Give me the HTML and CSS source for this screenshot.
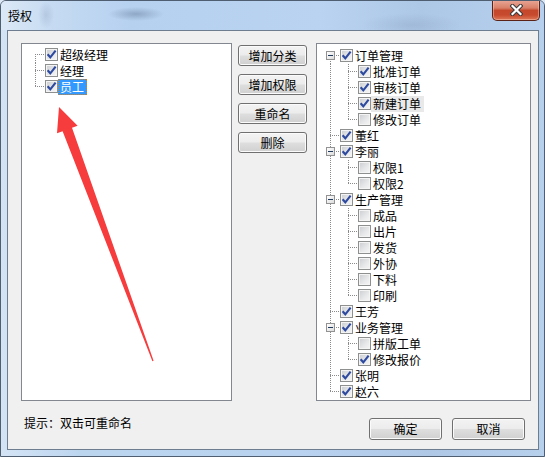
FILE: index.html
```html
<!DOCTYPE html>
<html lang="zh-CN">
<head>
    <meta charset="UTF-8">
    <title>授权</title>
    <link rel="stylesheet" href="styles.css">
</head>
<body>
    <div class="window">
        <div class="titlebar">
            <span class="title">授权</span>
            <button class="close">
                <svg width="13" height="12" viewBox="0 0 13 12">
                    <path d="M2.5 2 L10.5 10 M10.5 2 L2.5 10" stroke="#3a3a3a" stroke-width="4.2" stroke-linecap="square"/>
                    <path d="M2.5 2 L10.5 10 M10.5 2 L2.5 10" stroke="#fff" stroke-width="2.2" stroke-linecap="square"/>
                </svg>
            </button>
        </div>
        <div class="client">
            <div class="main">
                <div class="panel left-panel">
                    <div class="tree left-tree" id="leftTree"></div>
                    <svg class="arrow" width="102" height="260" viewBox="0 0 102 260">
                        <polygon points="5,3 23.6,21.7 18,23.8 99.6,256.8 98.4,257.2 8.6,27.2 3,29.3" fill="#f63c3c"/>
                    </svg>
                </div>
                <div class="side-buttons">
                    <button class="btn">增加分类</button>
                    <button class="btn">增加权限</button>
                    <button class="btn">重命名</button>
                    <button class="btn">删除</button>
                </div>
                <div class="panel right-panel">
                    <div class="tree right-tree" id="rightTree"></div>
                </div>
            </div>
            <div class="footer">
                <span class="hint">提示：双击可重命名</span>
                <div class="footer-buttons">
                    <button class="btn wide">确定</button>
                    <button class="btn wide">取消</button>
                </div>
            </div>
        </div>
    </div>

<script>
//チェックマーク
const check = '<svg width="11" height="11" viewBox="0 0 11 11"><path d="M1.6 5.2 L4.3 8.3 L9.6 1.6" fill="none" stroke="#2e4aa0" stroke-width="2.1"/></svg>';

const leftItems = [
    {text: '超级经理', checked: true},
    {text: '经理', checked: true},
    {text: '员工', checked: true, sel: true}
];

const rightItems = [
    {text: '订单管理', checked: true, children: [
        {text: '批准订单', checked: true},
        {text: '审核订单', checked: true},
        {text: '新建订单', checked: true, hot: true},
        {text: '修改订单'}
    ]},
    {text: '董红', checked: true},
    {text: '李丽', checked: true, children: [
        {text: '权限1'},
        {text: '权限2'}
    ]},
    {text: '生产管理', checked: true, children: [
        {text: '成品'},
        {text: '出片'},
        {text: '发货'},
        {text: '外协'},
        {text: '下料'},
        {text: '印刷'}
    ]},
    {text: '王芳', checked: true},
    {text: '业务管理', checked: true, children: [
        {text: '拼版工单'},
        {text: '修改报价', checked: true}
    ]},
    {text: '张明', checked: true},
    {text: '赵六', checked: true}
];

const makeRow = (guides, item) => {
    const row = document.createElement('div');
    row.className = 'row';
    guides.forEach((type, i) => {
        const g = document.createElement('span');
        g.className = 'g ' + type;
        if (i === guides.length - 1 && item.children) {
            const exp = document.createElement('span');
            exp.className = 'exp';
            g.appendChild(exp);
        }
        row.appendChild(g);
    });
    const cb = document.createElement('span');
    cb.className = item.checked ? 'cb on' : 'cb';
    if (item.checked) cb.innerHTML = check;
    row.appendChild(cb);
    const label = document.createElement('span');
    label.className = 'label';
    if (item.sel) label.className += ' sel';
    if (item.hot) label.className += ' hot';
    label.textContent = item.text;
    row.appendChild(label);
    return row;
};

const buildTree = (el, items) => {
    items.forEach((item, i) => {
        let type = 'tee';
        if (i === 0) type = 'first';
        if (i === items.length - 1) type = 'end';
        el.appendChild(makeRow([type], item));
        if (item.children) {
            const parentCol = i === items.length - 1 ? 'blank' : 'bar';
            item.children.forEach((child, j) => {
                const t = j === item.children.length - 1 ? 'end' : 'tee';
                el.appendChild(makeRow([parentCol, t], child));
            });
        }
    });
};

buildTree(document.getElementById('leftTree'), leftItems);
buildTree(document.getElementById('rightTree'), rightItems);
</script>
</body>
</html>
```

FILE: styles.css
```css
body{
    margin:0;
    background:#dce8f5;
    font:12px "Noto Sans CJK SC", "Liberation Sans", sans-serif;
}
.window{
    width:545px;
    height:457px;
    box-sizing:border-box;
    border:1px solid #4f5e70;
    border-radius:6px 6px 0 0;
    display:flex;
    flex-direction:column;
    background:linear-gradient(to right, #d4e4f5 0, #bcd5ef 80px, #b8d2ef 300px, #aec8e6 430px, #b7d0ec 545px);
    overflow:hidden;
}
.titlebar{
    height:29px;
    flex:none;
    display:flex;
    align-items:flex-start;
    background:
        radial-gradient(ellipse 28px 7px at 135px 13px, rgba(70,90,120,.35), transparent),
        radial-gradient(ellipse 8px 14px at 45px 14px, rgba(120,140,170,.25), transparent),
        radial-gradient(ellipse 50px 12px at 410px 24px, rgba(110,130,160,.2), transparent),
        linear-gradient(to right, #dce9f7 0, #c6dbf2 50px, #b6d1f0 130px, #b9d3f0 320px, #adc7e7 420px, #b6d0ed 544px);
}
.title{
    margin:8px 0 0 7px;
    line-height:14px;
    color:#000;
}
.close{
    margin:-1px 4px 0 auto;
    width:48px;
    height:21px;
    padding:0;
    border:1px solid #5b2218;
    border-top:none;
    border-radius:0 0 5px 5px;
    background:linear-gradient(#e9a898 0%, #d98068 40%, #c4462b 52%, #c84a2e 75%, #dd7758 100%);
    box-shadow:inset 0 0 0 1px rgba(255,210,190,.45);
    display:flex;
    align-items:center;
    justify-content:center;
}
.client{
    height:420px;
    flex:none;
    margin:0 5px 0 6px;
    box-sizing:border-box;
    border:1px solid #6e7d8f;
    background:#f0f0f0;
    display:flex;
    flex-direction:column;
}
.main{
    display:flex;
    margin:12px 7px 0 13px;
    height:358px;
}
.panel{
    box-sizing:border-box;
    height:358px;
    border:1px solid #828790;
    background:#fff;
    position:relative;
}
.left-panel{
    width:211px;
}
.right-panel{
    width:215px;
    margin-left:9px;
}
.side-buttons{
    width:69px;
    margin:2px 0 0 6px;
    display:flex;
    flex-direction:column;
    gap:8px;
}
.btn{
    font:12px "Noto Sans CJK SC", "Liberation Sans", sans-serif;
    color:#000;
    height:21px;
    padding:0;
    border:1px solid #707070;
    border-radius:3px;
    background:linear-gradient(#f3f3f3 0%, #ececec 48%, #dedede 52%, #d0d0d0 100%);
    box-shadow:inset 0 0 0 1px #fbfbfb;
    line-height:18px;
}
.btn.wide{
    width:73px;
    height:22px;
}
.footer{
    display:flex;
    align-items:flex-start;
    margin:17px 13px 0 16px;
}
.hint{
    line-height:12px;
    margin-top:-1px;
}
.footer-buttons{
    margin-left:auto;
    display:flex;
    gap:10px;
}
.arrow{
    position:absolute;
    left:32px;
    top:60px;
}

/* tree */
.tree{
    padding:3px 0 0 13px;
}
.right-tree{
    padding-top:4px;
}
.row{
    display:flex;
    height:16px;
}
.g{
    flex:none;
    display:block;
    width:10px;
    height:16px;
    --v:repeating-linear-gradient(#8a8a8a 0 1px, transparent 1px 2px);
    --h:repeating-linear-gradient(to right, #8a8a8a 0 1px, transparent 1px 2px);
}
.g.tee{
    background:var(--h) 0 7px / 100% 1px no-repeat, var(--v) 0 0 / 1px 100% no-repeat;
}
.g.first{
    background:var(--h) 0 7px / 100% 1px no-repeat, var(--v) 0 7px / 1px 9px no-repeat;
}
.g.end{
    background:var(--h) 0 7px / 100% 1px no-repeat, var(--v) 0 0 / 1px 8px no-repeat;
}
.g.bar{
    width:18px;
    background:var(--v) 0 0 / 1px 100% no-repeat;
}
.g.blank{
    width:18px;
}
.exp{
    display:block;
    width:9px;
    height:9px;
    box-sizing:border-box;
    margin:3px 0 0 -4px;
    border:1px solid #929292;
    background:
        linear-gradient(#1f3a5e, #1f3a5e) center / 5px 1px no-repeat,
        linear-gradient(135deg, #ffffff, #dcdcdc);
}
.cb{
    flex:none;
    width:13px;
    height:13px;
    box-sizing:border-box;
    margin-top:1px;
    border:1px solid #8e8f8f;
    background:linear-gradient(135deg, #c9ccd1 0%, #e6e7e8 55%, #f7f7f7 100%);
    box-shadow:inset 0 0 0 1px #f4f4f4;
}
.cb svg{
    display:block;
}
.label{
    height:16px;
    line-height:16px;
    padding:0 3px 0 2px;
    white-space:nowrap;
    color:#000;
}
.label.sel{
    background:#3399ff;
    color:#fff;
    outline:1px dotted #d08020;
    outline-offset:-1px;
}
.label.hot{
    background:#e9e9e9;
}
```
